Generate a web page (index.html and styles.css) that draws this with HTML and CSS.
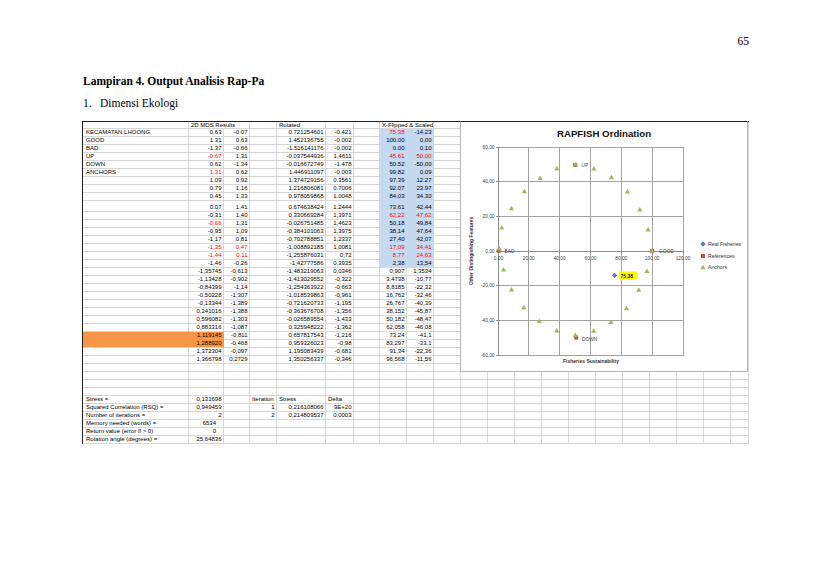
FILE: index.html
```html
<!DOCTYPE html>
<html>
<head>
<meta charset="utf-8">
<link rel="stylesheet" href="styles.css">
</head>
<body>
<div class="page">
  <p class="pagenum">65</p>
  <h1 class="title">Lampiran 4. Output Analisis Rap-Pa</h1>
  <h2 class="subtitle"><span class="num">1.</span>Dimensi Ekologi</h2>
  <div class="sheet">
    <table class="grid">
      <colgroup>
        <col class="ca"><col class="cb"><col class="cc"><col class="cd"><col class="ce"><col class="cf"><col class="cg"><col class="ch"><col class="ci">
        <col class="cx"><col class="cx"><col class="cx"><col class="cx"><col class="cx"><col class="cx"><col class="cx"><col class="cx"><col class="cx"><col class="cx"><col class="cx"><col class="cy">
      </colgroup>
      <tr class="rh"><td></td><td class="hd" colspan="2">2D MDS Results</td><td></td><td class="hd">Rotated</td><td></td><td></td><td class="hd" colspan="2">X-Flipped &amp; Scaled</td><td></td><td></td><td></td><td></td><td></td><td></td><td></td><td></td><td></td><td></td><td></td><td></td></tr>
      <tr><td class="l">KECAMATAN LHOONG</td><td>0.63</td><td>-0.07</td><td></td><td>0.721254601</td><td>-0.421</td><td></td><td class="bl red">75.38</td><td class="bl bi">-14.23</td><td></td><td></td><td></td><td></td><td></td><td></td><td></td><td></td><td></td><td></td><td></td><td></td></tr>
      <tr><td class="l">GOOD</td><td>1.31</td><td>0.63</td><td></td><td>1.452136755</td><td>-0.002</td><td></td><td class="bl">100.00</td><td class="bl bi">0.00</td><td></td><td></td><td></td><td></td><td></td><td></td><td></td><td></td><td></td><td></td><td></td><td></td></tr>
      <tr><td class="l">BAD</td><td>-1.37</td><td>-0.66</td><td></td><td>-1.516141176</td><td>-0.002</td><td></td><td class="bl">0.00</td><td class="bl bi">0.10</td><td></td><td></td><td></td><td></td><td></td><td></td><td></td><td></td><td></td><td></td><td></td><td></td></tr>
      <tr><td class="l">UP</td><td class="red">-0.67</td><td>1.31</td><td></td><td>-0.037544936</td><td>1.4611</td><td></td><td class="bl red">45.61</td><td class="bl bi red">50.00</td><td></td><td></td><td></td><td></td><td></td><td></td><td></td><td></td><td></td><td></td><td></td><td></td></tr>
      <tr><td class="l">DOWN</td><td>0.62</td><td>-1.34</td><td></td><td>-0.016672749</td><td>-1.478</td><td></td><td class="bl">50.52</td><td class="bl bi">-50.00</td><td></td><td></td><td></td><td></td><td></td><td></td><td></td><td></td><td></td><td></td><td></td><td></td></tr>
      <tr><td class="l">ANCHORS</td><td class="red">1.31</td><td>0.62</td><td></td><td>1.446911097</td><td>-0.003</td><td></td><td class="bl">99.82</td><td class="bl bi">0.09</td><td></td><td></td><td></td><td></td><td></td><td></td><td></td><td></td><td></td><td></td><td></td><td></td></tr>
      <tr><td></td><td>1.09</td><td>0.92</td><td></td><td>1.374729156</td><td>0.3561</td><td></td><td class="bl">97.39</td><td class="bl bi">12.27</td><td></td><td></td><td></td><td></td><td></td><td></td><td></td><td></td><td></td><td></td><td></td><td></td></tr>
      <tr><td></td><td>0.79</td><td>1.16</td><td></td><td>1.216806081</td><td>0.7006</td><td></td><td class="bl">92.07</td><td class="bl bi">23.97</td><td></td><td></td><td></td><td></td><td></td><td></td><td></td><td></td><td></td><td></td><td></td><td></td></tr>
      <tr><td></td><td>0.45</td><td>1.33</td><td></td><td>0.978059868</td><td>1.0048</td><td></td><td class="bl">84.03</td><td class="bl bi">34.30</td><td></td><td></td><td></td><td></td><td></td><td></td><td></td><td></td><td></td><td></td><td></td><td></td></tr>
      <tr class="rt"><td></td><td>0.07</td><td>1.41</td><td></td><td>0.674638424</td><td>1.2444</td><td></td><td class="bl">73.61</td><td class="bl bi">42.44</td><td></td><td></td><td></td><td></td><td></td><td></td><td></td><td></td><td></td><td></td><td></td><td></td></tr>
      <tr><td></td><td>-0,31</td><td>1,40</td><td></td><td>0,330669284</td><td>1,3971</td><td></td><td class="bl red">62,22</td><td class="bl bi red">47,62</td><td></td><td></td><td></td><td></td><td></td><td></td><td></td><td></td><td></td><td></td><td></td><td></td></tr>
      <tr><td></td><td class="red">-0,66</td><td>1,31</td><td></td><td>-0,026751485</td><td>1,4623</td><td></td><td class="bl">50,18</td><td class="bl bi">49,84</td><td></td><td></td><td></td><td></td><td></td><td></td><td></td><td></td><td></td><td></td><td></td><td></td></tr>
      <tr><td></td><td>-0,95</td><td>1,09</td><td></td><td>-0,384101063</td><td>1,3975</td><td></td><td class="bl">38,14</td><td class="bl bi">47,64</td><td></td><td></td><td></td><td></td><td></td><td></td><td></td><td></td><td></td><td></td><td></td><td></td></tr>
      <tr><td></td><td>-1,17</td><td>0,81</td><td></td><td>-0,702788851</td><td>1,2337</td><td></td><td class="bl">27,40</td><td class="bl bi">42,07</td><td></td><td></td><td></td><td></td><td></td><td></td><td></td><td></td><td></td><td></td><td></td><td></td></tr>
      <tr><td></td><td class="red">-1,35</td><td class="red">0,47</td><td></td><td>-1,008892185</td><td>1,0081</td><td></td><td class="bl red">17,09</td><td class="bl bi red">34,41</td><td></td><td></td><td></td><td></td><td></td><td></td><td></td><td></td><td></td><td></td><td></td><td></td></tr>
      <tr><td></td><td class="red">-1,44</td><td class="red">0,11</td><td></td><td>-1,255876031</td><td>0,72</td><td></td><td class="bl red">8,77</td><td class="bl bi red">24,63</td><td></td><td></td><td></td><td></td><td></td><td></td><td></td><td></td><td></td><td></td><td></td><td></td></tr>
      <tr><td></td><td>-1,46</td><td>-0,26</td><td></td><td>-1,42777586</td><td>0,3935</td><td></td><td class="bl bl-last">2,38</td><td class="bl bi bl-last">13,54</td><td></td><td></td><td></td><td></td><td></td><td></td><td></td><td></td><td></td><td></td><td></td><td></td></tr>
      <tr><td></td><td>-1,35745</td><td>-0,613</td><td></td><td>-1,483219063</td><td>0,0346</td><td></td><td>0,907</td><td>1,3534</td><td></td><td></td><td></td><td></td><td></td><td></td><td></td><td></td><td></td><td></td><td></td><td></td></tr>
      <tr><td></td><td>-1,13428</td><td>-0,902</td><td></td><td>-1,413029552</td><td>-0,322</td><td></td><td>3,4738</td><td>-10,77</td><td></td><td></td><td></td><td></td><td></td><td></td><td></td><td></td><td></td><td></td><td></td><td></td></tr>
      <tr><td></td><td>-0,84399</td><td>-1,14</td><td></td><td>-1,254363922</td><td>-0,663</td><td></td><td>8,8185</td><td>-22,32</td><td></td><td></td><td></td><td></td><td></td><td></td><td></td><td></td><td></td><td></td><td></td><td></td></tr>
      <tr><td></td><td>-0,50228</td><td>-1,307</td><td></td><td>-1,018539863</td><td>-0,961</td><td></td><td>16,762</td><td>-32,46</td><td></td><td></td><td></td><td></td><td></td><td></td><td></td><td></td><td></td><td></td><td></td><td></td></tr>
      <tr><td></td><td>-0,13344</td><td>-1,389</td><td></td><td>-0,721620733</td><td>-1,195</td><td></td><td>26,767</td><td>-40,39</td><td></td><td></td><td></td><td></td><td></td><td></td><td></td><td></td><td></td><td></td><td></td><td></td></tr>
      <tr><td></td><td>0,241016</td><td>-1,388</td><td></td><td>-0,363676708</td><td>-1,356</td><td></td><td>38,152</td><td>-45,87</td><td></td><td></td><td></td><td></td><td></td><td></td><td></td><td></td><td></td><td></td><td></td><td></td></tr>
      <tr><td></td><td>0,596082</td><td>-1,303</td><td></td><td>-0,026589554</td><td>-1,433</td><td></td><td>50,182</td><td>-48,47</td><td></td><td></td><td></td><td></td><td></td><td></td><td></td><td></td><td></td><td></td><td></td><td></td></tr>
      <tr><td></td><td>0,883316</td><td>-1,087</td><td></td><td>0,325948222</td><td>-1,362</td><td></td><td>62,058</td><td>-46,08</td><td></td><td></td><td></td><td></td><td></td><td></td><td></td><td></td><td></td><td></td><td></td><td></td></tr>
      <tr><td class="og"></td><td class="og">1,119145</td><td>-0,811</td><td></td><td>0,657817543</td><td>-1,216</td><td></td><td>73,24</td><td>-41,1</td><td></td><td></td><td></td><td></td><td></td><td></td><td></td><td></td><td></td><td></td><td></td><td></td></tr>
      <tr><td class="og og-last"></td><td class="og og-last">1,288920</td><td>-0,468</td><td></td><td>0,959326023</td><td>-0,98</td><td></td><td>83,297</td><td>-33,1</td><td></td><td></td><td></td><td></td><td></td><td></td><td></td><td></td><td></td><td></td><td></td><td></td></tr>
      <tr><td></td><td>1,372304</td><td>-0,097</td><td></td><td>1,195083439</td><td>-0,681</td><td></td><td>91,34</td><td>-22,36</td><td></td><td></td><td></td><td></td><td></td><td></td><td></td><td></td><td></td><td></td><td></td><td></td></tr>
      <tr><td></td><td>1,366798</td><td>0,2729</td><td></td><td>1,350256337</td><td>-0,346</td><td></td><td>96,568</td><td>-11,56</td><td></td><td></td><td></td><td></td><td></td><td></td><td></td><td></td><td></td><td></td><td></td><td></td></tr>
      <tr><td></td><td></td><td></td><td></td><td></td><td></td><td></td><td></td><td></td><td></td><td></td><td></td><td></td><td></td><td></td><td></td><td></td><td></td><td></td><td></td><td></td></tr>
      <tr><td></td><td></td><td></td><td></td><td></td><td></td><td></td><td></td><td></td><td></td><td></td><td></td><td></td><td></td><td></td><td></td><td></td><td></td><td></td><td></td><td></td></tr>
      <tr><td></td><td></td><td></td><td></td><td></td><td></td><td></td><td></td><td></td><td></td><td></td><td></td><td></td><td></td><td></td><td></td><td></td><td></td><td></td><td></td><td></td></tr>
      <tr><td></td><td></td><td></td><td></td><td></td><td></td><td></td><td></td><td></td><td></td><td></td><td></td><td></td><td></td><td></td><td></td><td></td><td></td><td></td><td></td><td></td></tr>
      <tr><td class="l">Stress =</td><td>0,131698</td><td></td><td class="hd">Iteration</td><td class="hd">Stress</td><td class="hd">Delta</td><td></td><td></td><td></td><td></td><td></td><td></td><td></td><td></td><td></td><td></td><td></td><td></td><td></td><td></td><td></td></tr>
      <tr><td class="l">Squared Correlation (RSQ) =</td><td>0,949459</td><td></td><td>1</td><td>0,216108066</td><td>9E+20</td><td></td><td></td><td></td><td></td><td></td><td></td><td></td><td></td><td></td><td></td><td></td><td></td><td></td><td></td><td></td></tr>
      <tr><td class="l">Number of iterations =</td><td>2</td><td></td><td>2</td><td>0,214809537</td><td>0,0003</td><td></td><td></td><td></td><td></td><td></td><td></td><td></td><td></td><td></td><td></td><td></td><td></td><td></td><td></td><td></td></tr>
      <tr><td class="l">Memory needed (words) =</td><td class="pad">6534</td><td></td><td></td><td></td><td></td><td></td><td></td><td></td><td></td><td></td><td></td><td></td><td></td><td></td><td></td><td></td><td></td><td></td><td></td><td></td></tr>
      <tr><td class="l">Return value (error if &gt; 0)</td><td class="pad">0</td><td></td><td></td><td></td><td></td><td></td><td></td><td></td><td></td><td></td><td></td><td></td><td></td><td></td><td></td><td></td><td></td><td></td><td></td><td></td></tr>
      <tr><td class="l">Rotation angle (degrees) =</td><td>25,64836</td><td></td><td></td><td></td><td></td><td></td><td></td><td></td><td></td><td></td><td></td><td></td><td></td><td></td><td></td><td></td><td></td><td></td><td></td><td></td></tr>
    </table>

    <div class="chart">
      <svg class="plot" width="286" height="248" viewBox="1 1 286 248">
        <defs>
          <polygon id="tri" points="0,-2.6 2.6,1.9 -2.6,1.9" fill="#9bbb59"/>
          <rect id="sq" x="-2" y="-2" width="4" height="4" fill="#c0504d"/>
          <polygon id="dia" points="0,-2.7 2.7,0 0,2.7 -2.7,0" fill="#4f81bd"/>
        </defs>
        <text class="ttl" x="144" y="16" text-anchor="middle">RAPFISH Ordination</text>
        <g class="gl">
          <line x1="68.5" y1="26" x2="68.5" y2="234.5"/>
          <line x1="99.5" y1="26" x2="99.5" y2="234.5"/>
          <line x1="130.5" y1="26" x2="130.5" y2="234.5"/>
          <line x1="161.5" y1="26" x2="161.5" y2="234.5"/>
          <line x1="192.5" y1="26" x2="192.5" y2="234.5"/>
          <line x1="223.5" y1="26" x2="223.5" y2="234.5"/>
          <line x1="38" y1="26.5" x2="224" y2="26.5"/>
          <line x1="38" y1="60.5" x2="224" y2="60.5"/>
          <line x1="38" y1="95.5" x2="224" y2="95.5"/>
          <line x1="38" y1="164.5" x2="224" y2="164.5"/>
          <line x1="38" y1="199.5" x2="224" y2="199.5"/>
          <line x1="38" y1="234.5" x2="224" y2="234.5"/>
        </g>
        <g class="axis">
          <line x1="38.5" y1="26" x2="38.5" y2="235"/>
          <line x1="38" y1="130.5" x2="224" y2="130.5"/>
          <line x1="36" y1="26.5" x2="40" y2="26.5"/>
          <line x1="36" y1="60.5" x2="40" y2="60.5"/>
          <line x1="36" y1="95.5" x2="40" y2="95.5"/>
          <line x1="36" y1="130.5" x2="40" y2="130.5"/>
          <line x1="36" y1="164.5" x2="40" y2="164.5"/>
          <line x1="36" y1="199.5" x2="40" y2="199.5"/>
          <line x1="36" y1="234.5" x2="40" y2="234.5"/>
          <line x1="68.5" y1="129" x2="68.5" y2="132.5"/>
          <line x1="99.5" y1="129" x2="99.5" y2="132.5"/>
          <line x1="130.5" y1="129" x2="130.5" y2="132.5"/>
          <line x1="161.5" y1="129" x2="161.5" y2="132.5"/>
          <line x1="192.5" y1="129" x2="192.5" y2="132.5"/>
          <line x1="223.5" y1="129" x2="223.5" y2="132.5"/>
        </g>
        <g class="tick" text-anchor="end">
          <text x="34.5" y="28.2">60,00</text>
          <text x="34.5" y="62.4">40,00</text>
          <text x="34.5" y="97.2">20,00</text>
          <text x="34.5" y="132.2">0,00</text>
          <text x="34.5" y="166.4">-20,00</text>
          <text x="34.5" y="201.2">-40,00</text>
          <text x="34.5" y="236.2">-60,00</text>
        </g>
        <g class="tick" text-anchor="middle">
          <text x="38.5" y="138.6">0,00</text>
          <text x="68.8" y="138.6">20,00</text>
          <text x="99.7" y="138.6">40,00</text>
          <text x="130.5" y="138.6">60,00</text>
          <text x="161.3" y="138.6">80,00</text>
          <text x="192.2" y="138.6">100,00</text>
          <text x="223" y="138.6">120,00</text>
        </g>
        <text class="axt" x="131" y="241.5" text-anchor="middle">Fisheries Sustainability</text>
        <text class="axt" transform="translate(12.5 130) rotate(-90)" text-anchor="middle">Other Distingishing Features</text>

        <rect class="hl" x="158.7" y="150.4" width="18.7" height="8.6"/>
        <text class="hlt" x="160.6" y="156.6">75,38</text>
        <use href="#dia" x="154.6" y="154.4"/>

        <use href="#sq" x="115.2" y="44"/>
        <use href="#sq" x="116.2" y="216.6"/>
        <use href="#sq" x="192.2" y="130"/>
        <use href="#sq" x="38.6" y="129.8"/>

        <use href="#tri" x="191.9" y="129.8"/>
        <use href="#tri" x="188.1" y="108.7"/>
        <use href="#tri" x="179.9" y="88.5"/>
        <use href="#tri" x="167.5" y="70.5"/>
        <use href="#tri" x="151.5" y="56.4"/>
        <use href="#tri" x="133.9" y="47.5"/>
        <use href="#tri" x="115.4" y="43.6"/>
        <use href="#tri" x="96.8" y="47.4"/>
        <use href="#tri" x="80.2" y="57.1"/>
        <use href="#tri" x="64.3" y="70.4"/>
        <use href="#tri" x="51.5" y="87.3"/>
        <use href="#tri" x="41.7" y="106.5"/>
        <use href="#tri" x="39.4" y="127.7"/>
        <use href="#tri" x="43.4" y="148.7"/>
        <use href="#tri" x="51.6" y="168.7"/>
        <use href="#tri" x="63.8" y="186.3"/>
        <use href="#tri" x="79.3" y="200.0"/>
        <use href="#tri" x="96.8" y="209.5"/>
        <use href="#tri" x="115.4" y="214.0"/>
        <use href="#tri" x="133.7" y="209.9"/>
        <use href="#tri" x="150.9" y="201.2"/>
        <use href="#tri" x="166.4" y="187.4"/>
        <use href="#tri" x="178.8" y="168.8"/>
        <use href="#tri" x="186.9" y="150.0"/>

        <g class="lbl">
          <text x="121.5" y="46">UP</text>
          <text x="44.5" y="132">BAD</text>
          <text x="199" y="132">GOOD</text>
          <text x="122" y="219.8">DOWN</text>
        </g>

        <use href="#dia" x="243" y="123"/>
        <use href="#sq" x="243" y="135"/>
        <use href="#tri" x="243" y="146.3"/>
        <g class="leg">
          <text x="248" y="124.9">Real Fisheries</text>
          <text x="248" y="136.9">References</text>
          <text x="248" y="148">Anchors</text>
        </g>
      </svg>
    </div>
  </div>
</div>
</body>
</html>
```

FILE: styles.css
```css
html, body {
  margin: 0;
  padding: 0;
  background: #ffffff;
}

body {
  font-family: "Liberation Serif", "Times New Roman", serif;
  color: #000000;
}

.page {
  width: 667px;
  padding: 34px 0 0 82px;
}

.pagenum {
  margin: 0;
  text-align: right;
  font-size: 11.5px;
  line-height: 14px;
}

.title {
  margin: 26px 0 0 1px;
  font-size: 11.5px;
  line-height: 14px;
  font-weight: bold;
}

.subtitle {
  margin: 8px 0 0 1px;
  font-size: 11.5px;
  line-height: 14px;
  font-weight: normal;
}

.subtitle .num {
  display: inline-block;
  width: 17px;
}

.sheet {
  position: relative;
  margin-top: 11px;
}

.grid {
  width: 667px;
  table-layout: fixed;
  border-collapse: separate;
  border-spacing: 0;
  border-top: 1px solid #1e1e1e;
  border-left: 1px solid #1e1e1e;
  font-family: "Liberation Sans", Arial, sans-serif;
  font-size: 6px;
  color: #000000;
}

.ca { width: 106px; }
.cb { width: 35px; }
.cc { width: 26px; }
.cd { width: 27px; }
.ce { width: 49px; }
.cf { width: 28px; }
.cg { width: 26px; }
.ch { width: 27px; }
.ci { width: 27px; }
.cx { width: 27px; }
.cy { width: 18px; }

.grid tr {
  height: 8px;
}

.grid tr.rh {
  height: 7px;
}

.grid tr.rt {
  height: 11px;
}

.grid td {
  box-sizing: border-box;
  padding: 0 1.5px 0 0;
  border-right: 1px solid #d6d6d6;
  border-bottom: 1px solid #d6d6d6;
  line-height: 7px;
  white-space: nowrap;
  overflow: hidden;
  text-align: right;
  vertical-align: bottom;
}

.grid .rh td {
  line-height: 6px;
}

.grid td.l {
  text-align: left;
  padding: 0 0 0 3px;
}

.grid td.hd {
  text-align: left;
  padding: 0 0 0 2px;
}

.grid td.pad {
  padding-right: 7px;
}

.grid td.red {
  color: #ff0000;
}

.grid td.bl {
  background: #c5d9f1;
  border-bottom-color: #c5d9f1;
  border-right-color: #c5d9f1;
}

.grid td.bl.bi {
  border-right-color: #d6d6d6;
}

.grid td.bl-last {
  border-bottom-color: #d6d6d6;
}

.grid td.og {
  background: #f79646;
  border-bottom-color: #f79646;
  border-right-color: #f79646;
}

.grid td.og-last {
  border-bottom-color: #d6d6d6;
}

.chart {
  position: absolute;
  top: 0;
  left: 378px;
  width: 288px;
  height: 251px;
  box-sizing: border-box;
  background: #ffffff;
  border: 1px solid #b4b4b4;
  border-top-color: #1e1e1e;
}

.plot {
  display: block;
  overflow: visible;
}

.plot .ttl {
  font-family: "Liberation Sans", Arial, sans-serif;
  font-weight: bold;
  font-size: 9.7px;
  fill: #111111;
}

.plot .gl line {
  stroke: #a3a3a3;
  stroke-width: 1;
  shape-rendering: crispEdges;
}

.plot .axis line {
  stroke: #8c8c8c;
  stroke-width: 1;
  shape-rendering: crispEdges;
}

.plot .tick text,
.plot .lbl text {
  font-family: "Liberation Sans", Arial, sans-serif;
  font-size: 4.8px;
  fill: #404040;
}

.plot .axt {
  font-family: "Liberation Sans", Arial, sans-serif;
  font-size: 5px;
  font-weight: bold;
  fill: #333333;
}

.plot .leg text {
  font-family: "Liberation Sans", Arial, sans-serif;
  font-size: 5.2px;
  fill: #333333;
}

.plot .hl {
  fill: #ffff00;
}

.plot .hlt {
  font-family: "Liberation Sans", Arial, sans-serif;
  font-size: 5px;
  font-weight: bold;
  fill: #222222;
}
```
